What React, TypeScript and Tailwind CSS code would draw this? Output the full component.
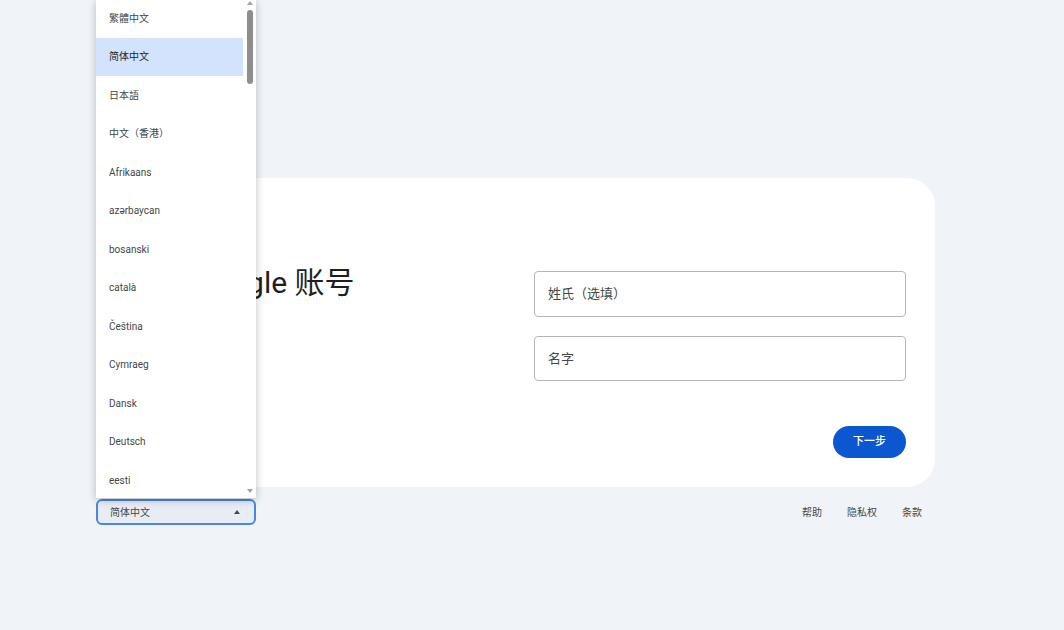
import React from "react";

const langs = [
  "繁體中文",
  "简体中文",
  "日本語",
  "中文（香港）",
  "Afrikaans",
  "azərbaycan",
  "bosanski",
  "català",
  "Čeština",
  "Cymraeg",
  "Dansk",
  "Deutsch",
  "eesti",
];

const font = { fontFamily: 'Roboto, "Noto Sans CJK SC", "Noto Sans", sans-serif' };

function GoogleLogo() {
  return (
    <svg width="38" height="38" viewBox="0 0 48 48">
      <path fill="#EA4335" d="M24 9.5c3.54 0 6.71 1.22 9.21 3.6l6.85-6.85C35.9 2.38 30.470 0 24 0 14.62 0 6.51 5.38 2.56 13.22l7.98 6.19C12.43 13.72 17.74 9.5 24 9.5z" />
      <path fill="#4285F4" d="M46.98 24.55c0-1.57-.15-3.09-.38-4.55H24v9.02h12.94c-.58 2.96-2.26 5.48-4.78 7.18l7.73 6c4.51-4.18 7.09-10.360 7.09-17.65z" />
      <path fill="#FBBC05" d="M10.53 28.59c-.48-1.45-.76-2.99-.76-4.59s.27-3.14.76-4.59l-7.98-6.19C.92 16.46 0 20.12 0 24c0 3.880.92 7.54 2.56 10.78l7.97-6.19z" />
      <path fill="#34A853" d="M24 48c6.48 0 11.93-2.13 15.89-5.81l-7.73-6c-2.15 1.45-4.92 2.3-8.16 2.3-6.26 0-11.57-4.22-13.47-9.91l-7.98 6.19C6.51 42.62 14.62 48 24 48z" />
    </svg>
  );
}

export default function App() {
  return (
    <div className="relative h-[630px] w-[1064px] overflow-hidden bg-[#f0f4f9]" style={font}>
      <div className="flex flex-col pt-[178px] pl-[96px]">
        {/* Card */}
        <div className="flex h-[309px] w-[839px] rounded-[28px] bg-white p-[29px]">
          <div className="flex w-[409px] flex-col">
            <div className="mt-[8px]">
              <GoogleLogo />
            </div>
            <div className="mt-[12px] text-[30px] leading-[36px] text-[#1f1f1f]">创建 Google 账号</div>
            <div className="mt-[16px] text-[13px] leading-[18px] text-[#1f1f1f]">请输入您的姓名</div>
          </div>
          <div className="flex flex-1 flex-col pt-[64px]">
            <div className="flex h-[46px] items-center rounded-[4px] border border-[#b4b6b5] px-[13px] text-[13px] text-[#444746]">
              姓氏（选填）
            </div>
            <div className="mt-[19px] flex h-[46px] items-center rounded-[4px] border border-[#b4b6b5] px-[13px] text-[13px] text-[#444746]">
              名字
            </div>
            <div className="mt-[45px] flex justify-end">
              <div className="flex h-[32px] w-[73px] items-center justify-center rounded-full bg-[#0b57d0] text-[11px] font-medium text-white">
                下一步
              </div>
            </div>
          </div>
        </div>
        {/* Footer */}
        <div className="mt-[12px] flex h-[26px] w-[839px] items-center justify-between">
          <div className="flex h-[26px] w-[160px] items-center justify-between rounded-[6px] border-2 border-[#4a85e6] bg-[#e8edf5] pl-[12px] pr-[14px] text-[10px] text-[#444746]">
            <span>简体中文</span>
            <span className="h-0 w-0 border-x-[3.5px] border-b-[4px] border-x-transparent border-b-[#444746]" />
          </div>
          <div className="flex items-center gap-[25px] pr-[13px] text-[10px] text-[#444746]">
            <span>帮助</span>
            <span>隐私权</span>
            <span>条款</span>
          </div>
        </div>
      </div>

      {/* Dropdown menu */}
      <div className="absolute left-[96px] top-0 flex h-[498px] w-[160px] overflow-hidden bg-white shadow-[0_2px_8px_rgba(0,0,0,0.25)]">
        <div className="mt-[-1px] flex flex-1 flex-col">
          {langs.map((l, i) => (
            <div
              key={l}
              className={
                i === 1
                  ? "flex h-[38.5px] shrink-0 items-center bg-[#d3e3fd] pl-[13px] text-[10px] text-[#1f1f1f]"
                  : "flex h-[38.5px] shrink-0 items-center pl-[13px] text-[10px] text-[#444746]"
              }
            >
              {l}
            </div>
          ))}
        </div>
        <div className="flex w-[13px] flex-col items-center">
          <span className="mt-[1px] h-0 w-0 border-x-[3.5px] border-b-[4px] border-x-transparent border-b-[#a3a3a3]" />
          <div className="mt-[5px] h-[74px] w-[6px] rounded-full bg-[#8e8e8e]" />
          <div className="flex-1" />
          <span className="mb-[5px] h-0 w-0 border-x-[3.5px] border-t-[4px] border-x-transparent border-t-[#a3a3a3]" />
        </div>
      </div>
    </div>
  );
}
